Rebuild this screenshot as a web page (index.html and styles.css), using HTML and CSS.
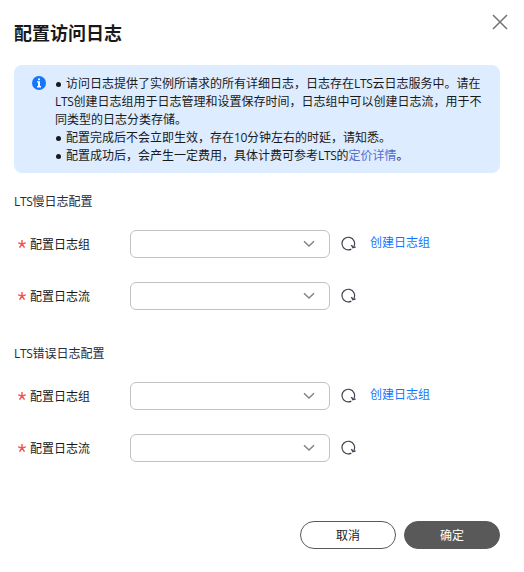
FILE: index.html
```html
<!DOCTYPE html>
<html lang="zh-CN">
<head>
    <meta charset="UTF-8">
    <title>配置访问日志</title>
    <link rel="stylesheet" href="styles.css">
</head>
<body>
    <svg class="sprite" width="0" height="0">
        <symbol id="arrow" viewBox="0 0 12 8">
            <path d="M1 1.2 L6 6 L11 1.2" fill="none" stroke="#808080" stroke-width="1.4"/>
        </symbol>
        <symbol id="refresh" viewBox="0 0 16 16">
            <path d="M11.3 13.1 A6.3 6.3 0 1 1 13.7 10.8" fill="none" stroke="#3f4350" stroke-width="1.2"/>
            <path d="M11.4 9 L12.9 11.7 L15.6 10.8" fill="none" stroke="#3f4350" stroke-width="1.4"/>
        </symbol>
    </svg>

    <div class="dialog">
        <button class="close" aria-label="关闭">
            <svg width="16" height="16" viewBox="0 0 16 16"><path d="M1 1 L15 15 M15 1 L1 15" stroke="#777" stroke-width="1.6"/></svg>
        </button>
        <h2>配置访问日志</h2>

        <div class="alert">
            <svg class="info" width="14" height="14" viewBox="0 0 14 14">
                <circle cx="7" cy="7" r="7" fill="#1476ff"/>
                <path d="M6 2.5 H8 V4.3 H6 Z M5 5.2 H8 V10 H9 V11.4 H5 V10 H6 V6.5 H5 Z" fill="#fff"/>
            </svg>
            <div class="alert-text">
                <p><i class="dot"></i>访问日志提供了实例所请求的所有详细日志，日志存在<span class="en">LTS</span>云日志服务中。请在<br><span class="en">LTS</span>创建日志组用于日志管理和设置保存时间，日志组中可以创建日志流，用于不<br>同类型的日志分类存储。</p>
                <p><i class="dot"></i>配置完成后不会立即生效，存在<span class="en">10</span>分钟左右的时延，请知悉。</p>
                <p><i class="dot"></i>配置成功后，会产生一定费用，具体计费可参考<span class="en">LTS</span>的<a href="#">定价详情</a>。</p>
            </div>
        </div>

        <div class="section">
            <h3><span class="en">LTS</span>慢日志配置</h3>
            <div class="row">
                <label><svg class="star" width="8" height="8" viewBox="0 0 8 8"><path d="M4 0 V4 M0.2 2.9 L4 4 L7.8 2.9 M1.5 7.7 L4 4 L6.5 7.7"/></svg>配置日志组</label>
                <div class="select"><svg width="12" height="8"><use href="#arrow"/></svg></div>
                <svg class="refresh" width="16" height="16"><use href="#refresh"/></svg>
                <a class="create" href="#">创建日志组</a>
            </div>
            <div class="row">
                <label><svg class="star" width="8" height="8" viewBox="0 0 8 8"><path d="M4 0 V4 M0.2 2.9 L4 4 L7.8 2.9 M1.5 7.7 L4 4 L6.5 7.7"/></svg>配置日志流</label>
                <div class="select"><svg width="12" height="8"><use href="#arrow"/></svg></div>
                <svg class="refresh" width="16" height="16"><use href="#refresh"/></svg>
            </div>
        </div>

        <div class="section">
            <h3><span class="en">LTS</span>错误日志配置</h3>
            <div class="row">
                <label><svg class="star" width="8" height="8" viewBox="0 0 8 8"><path d="M4 0 V4 M0.2 2.9 L4 4 L7.8 2.9 M1.5 7.7 L4 4 L6.5 7.7"/></svg>配置日志组</label>
                <div class="select"><svg width="12" height="8"><use href="#arrow"/></svg></div>
                <svg class="refresh" width="16" height="16"><use href="#refresh"/></svg>
                <a class="create" href="#">创建日志组</a>
            </div>
            <div class="row">
                <label><svg class="star" width="8" height="8" viewBox="0 0 8 8"><path d="M4 0 V4 M0.2 2.9 L4 4 L7.8 2.9 M1.5 7.7 L4 4 L6.5 7.7"/></svg>配置日志流</label>
                <div class="select"><svg width="12" height="8"><use href="#arrow"/></svg></div>
                <svg class="refresh" width="16" height="16"><use href="#refresh"/></svg>
            </div>
        </div>

        <div class="footer">
            <button class="btn">取消</button>
            <button class="btn btn-primary">确定</button>
        </div>
    </div>
</body>
</html>
```
FILE: styles.css
```css
* {
    box-sizing: border-box;
}
body {
    margin: 0;
    background: #fff;
    color: #191919;
    font-family: "Open Sans", "Noto Sans CJK SC", sans-serif;
    font-size: 12px;
    line-height: 18px;
}
h2, h3, p {
    margin: 0;
}
a {
    color: #1476ff;
    text-decoration: none;
}
.sprite {
    position: absolute;
}
.dialog {
    position: relative;
    height: 572px;
    padding: 20px 24px 0 14px;
}
.close {
    position: absolute;
    top: 14px;
    right: 16px;
    width: 16px;
    height: 16px;
    padding: 0;
    border: none;
    background: none;
    cursor: pointer;
}
.close svg {
    display: block;
}
h2 {
    font-size: 18px;
    line-height: 26px;
    font-weight: 700;
}
.en {
    letter-spacing: -0.35px;
}

/* info box */
.alert {
    display: flex;
    height: 108px;
    margin-top: 19px;
    padding: 10px 0 8px 18px;
    background: #deecff;
    border-radius: 8px;
}
.info {
    flex: none;
    margin: 1px 9px 0 0;
}
.alert-text {
    white-space: nowrap;
}
.alert-text a {
    color: #526ecc;
}
.dot {
    display: inline-block;
    width: 5px;
    height: 5px;
    margin: 0 5px 1px 1px;
    border-radius: 50%;
    background: #191919;
}

/* form */
.section {
    height: 152px;
    padding-top: 20px;
}
h3 {
    margin-bottom: 19px;
    color: #252b3a;
    font-size: 12px;
    font-weight: 400;
}
.row {
    display: flex;
    align-items: center;
    height: 28px;
    margin-bottom: 24px;
}
label {
    display: flex;
    align-items: center;
    width: 116px;
    padding: 2px 0 0 4px;
}
.star {
    margin-right: 4px;
    margin-bottom: 2px;
    fill: none;
    stroke: #fa4f4f;
    stroke-width: 1.4;
}
.select {
    display: flex;
    align-items: center;
    justify-content: flex-end;
    width: 200px;
    height: 28px;
    padding-right: 14px;
    border: 1px solid #c2c2c2;
    border-radius: 6px;
}
.refresh {
    margin-left: 10px;
}
.create {
    margin: 0 0 3px 14px;
}

/* buttons */
.footer {
    display: flex;
    justify-content: flex-end;
    gap: 8px;
    margin-top: 44px;
}
.btn {
    width: 96px;
    height: 28px;
    padding: 2px 0 0;
    border: 1px solid #595959;
    border-radius: 14px;
    background: #fff;
    color: #191919;
    font: inherit;
    cursor: pointer;
}
.btn-primary {
    background: #595959;
    color: #fff;
}
```
